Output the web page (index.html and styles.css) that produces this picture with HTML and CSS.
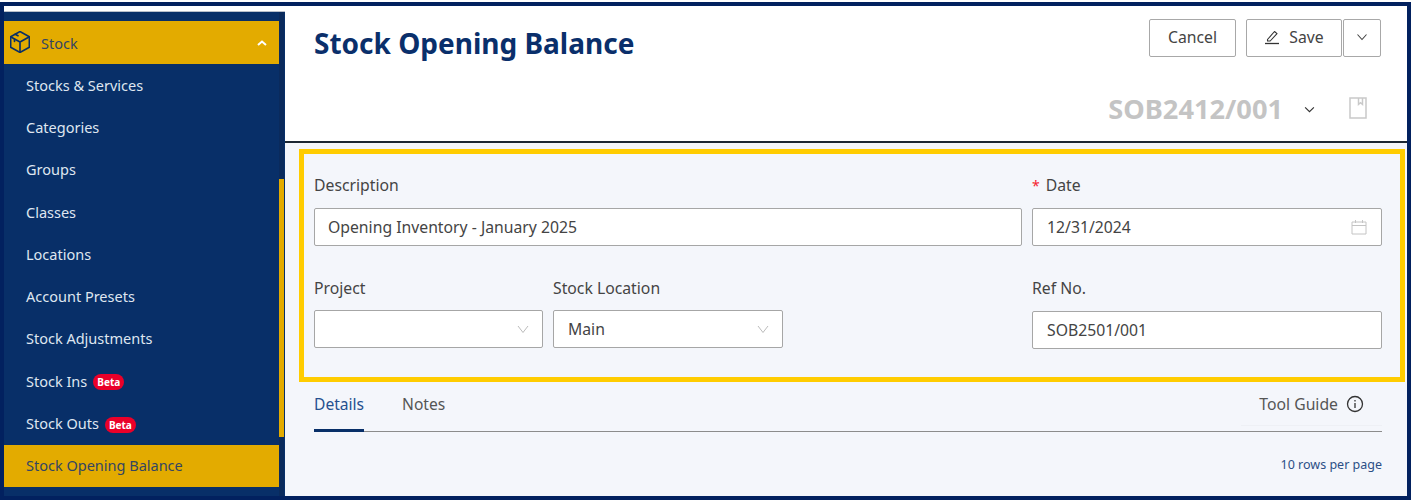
FILE: index.html
```html
<!DOCTYPE html>
<html lang="en">
<head>
<meta charset="utf-8">
<title>Stock Opening Balance</title>
<link rel="stylesheet" href="styles.css">
</head>
<body>
<div class="frame">
  <aside class="sidebar">
    <div class="sidebar-strip"></div>
    <div class="sidebar-body">
      <nav class="menu">
        <div class="menu-head">
          <svg class="cube" viewBox="2 1 18 20" width="20" height="22" fill="none" stroke="#0a2f66" stroke-width="1.500" stroke-linejoin="round" stroke-linecap="round"><path d="M11 1.500l8.500 4.800v9.400L11 20.500l-8.500-4.800V6.300z"/><path d="M2.800 6.500L11 11l8.200-4.500M11 11v9.300"/><path d="M6.700 3.900l2.500 1.400M6 8.500v2"/></svg>
          <span class="menu-head-label">Stock</span>
          <svg class="caret" viewBox="0 0 10 6" width="10" height="6" fill="none" stroke="#fff" stroke-width="2"><path d="M1 5l4-3.500L9 5"/></svg>
        </div>
        <a class="menu-item">Stocks &amp; Services</a>
        <a class="menu-item">Categories</a>
        <a class="menu-item">Groups</a>
        <a class="menu-item">Classes</a>
        <a class="menu-item">Locations</a>
        <a class="menu-item">Account Presets</a>
        <a class="menu-item">Stock Adjustments</a>
        <a class="menu-item">Stock Ins <span class="beta">Beta</span></a>
        <a class="menu-item">Stock Outs <span class="beta">Beta</span></a>
        <a class="menu-item active">Stock Opening Balance</a>
      </nav>
      <div class="scrolltrack"><div class="scrollthumb"></div></div>
    </div>
  </aside>
  <main class="main">
    <header class="header">
      <div class="title-row">
        <h1 class="title">Stock Opening Balance</h1>
        <div class="actions">
          <button class="btn btn-cancel">Cancel</button>
          <button class="btn btn-save">
            <svg viewBox="0 0 16 16" width="16" height="16" fill="none" stroke="#333" stroke-width="1.100" stroke-linejoin="round"><path d="M3.500 10.500L10.500 2.500l2.500 2.200-6.800 7.300H3.500z"/><path d="M1 14.500h14" stroke-width="1.300"/></svg>
            Save
          </button>
          <button class="btn btn-more">
            <svg viewBox="0 0 12 8" width="12" height="8" fill="none" stroke="#444" stroke-width="1.100"><path d="M1.500 1.500L6 6.500l4.500-5"/></svg>
          </button>
        </div>
      </div>
      <div class="doc-row">
        <span class="doc-no">SOB2412/001</span>
        <svg class="doc-chevron" viewBox="0 0 12 8" width="11" height="7" fill="none" stroke="#333" stroke-width="1.300"><path d="M1 1.500L6 6.500l5-5"/></svg>
        <svg class="doc-book" viewBox="0 0 18 22" width="18" height="22" fill="none" stroke="#c9c9c9" stroke-width="1.500"><path d="M1 1h16v20H1z"/><path d="M9.500 1v6.500l2-1.700 2 1.700V1"/></svg>
      </div>
    </header>
    <section class="content">
      <form class="form-box">
        <div class="field">
          <label class="label">Description</label>
          <div class="input input-desc">Opening Inventory - January 2025</div>
        </div>
        <div class="field">
          <label class="label"><span class="req">*</span>Date</label>
          <div class="input input-split">12/31/2024
            <svg viewBox="0 0 16 16" width="16" height="16" fill="none" stroke="#c4c4c4" stroke-width="1"><path d="M1 3h14v12H1zM1 6.500h14M4.500 1v3M11.500 1v3"/></svg>
          </div>
        </div>
        <div class="pair">
          <div class="field">
            <label class="label label-tight">Project</label>
            <div class="input input-split select"><span></span>
              <svg viewBox="0 0 12 8" width="12" height="8" fill="none" stroke="#bbb" stroke-width="1"><path d="M1 1l5 6.500L11 1"/></svg>
            </div>
          </div>
          <div class="field">
            <label class="label label-tight">Stock Location</label>
            <div class="input input-split select">Main
              <svg viewBox="0 0 12 8" width="12" height="8" fill="none" stroke="#bbb" stroke-width="1"><path d="M1 1l5 6.500L11 1"/></svg>
            </div>
          </div>
        </div>
        <div class="field field-ref">
          <label class="label">Ref No.</label>
          <div class="input">SOB2501/001</div>
        </div>
      </form>
      <div class="tabs">
        <a class="tab tab-active">Details</a>
        <a class="tab">Notes</a>
        <div class="guide">Tool Guide
          <svg viewBox="0 0 18 18" width="18" height="18" fill="none" stroke="#333" stroke-width="1.300"><circle cx="9" cy="9" r="7.500"/><path d="M9 8v5M9 5v1.500"/></svg>
        </div>
      </div>
      <div class="rows-per-page">10 rows per page</div>
    </section>
  </main>
</div>
</body>
</html>
```

FILE: styles.css
```css
* { box-sizing: border-box; }
html, body { margin: 0; padding: 0; height: 100%; overflow: hidden; background: #fff; }
body { padding: 2px 1px 0 0; font-family: "Noto Sans", "Open Sans", sans-serif; font-size: 15.750px; color: #444; }

.frame { display: flex; height: 498px; border: 4px solid #02215f; background: #f4f6fb; }

/* sidebar */
.sidebar { width: 281px; flex: none; display: flex; flex-direction: column; background: #082f68; }
.sidebar-strip { height: 6px; background: #fff; border-bottom: 1px solid #b8bfca; }
.sidebar-body { flex: 1; display: flex; }
.menu { width: 275px; flex: none; padding-top: 9px; }
.menu-head { height: 43px; display: flex; align-items: center; background: #e3ab00; padding: 0 12px 0 6px; }
.cube { flex: none; margin-top: -1px; }
.menu-head-label { flex: 1; margin-left: 11px; color: #344563; font-size: 14.500px; }
.menu-item { height: 42.300px; display: flex; align-items: center; gap: 6px; padding: 0 0 1px 22px; color: #dfe6f0; font-size: 14.500px; }
.menu-item.active { background: #e3ab00; color: #344563; }
.beta { background: #ea0029; color: #fff; border-radius: 8px; font-size: 10px; font-weight: 700; line-height: 16px; padding: 0 4px; margin-top: 3px; }
.scrolltrack { width: 5px; background: #0a2a5c; margin-right: 1px; padding-top: 167px; }
.scrollthumb { height: 258px; background: #e3ab00; }

/* main */
.main { flex: 1; min-width: 0; display: flex; flex-direction: column; }
.header { height: 137px; flex: none; background: #fff; border-bottom: 2px solid #1c2733; padding: 13px 26px 0 29px; }
.title-row { display: flex; justify-content: space-between; align-items: flex-start; }
.title { margin: 4px 0 0; font-size: 28px; line-height: 40px; font-weight: 700; color: #0a2f6b; }
.actions { display: flex; }
.btn { height: 38px; background: #fff; border: 1px solid #a8a8a8; border-radius: 2px; font: inherit; color: #444; padding: 0 0 2px; display: flex; align-items: center; justify-content: center; }
.btn-cancel { width: 87px; margin-right: 10px; }
.btn-save { width: 96px; gap: 9px; margin-right: 1px; }
.btn-more { width: 38px; }
.doc-row { display: flex; align-items: center; justify-content: flex-end; margin-top: 28px; padding-right: 14px; }
.doc-no { font-size: 27.200px; line-height: 36px; font-weight: 700; color: #c4c4c4; }
.doc-chevron { margin-left: 21px; }
.doc-book { margin-left: 34px; margin-top: -2px; }

/* content */
.content { flex: 1; padding: 6px 2px 0 14px; }
.form-box { display: grid; grid-template-columns: 708px 350px; column-gap: 10px; align-content: start; height: 233px; padding: 21px 0 0 10px; border: 5px solid #ffcc00; }
.field { display: flex; flex-direction: column; min-width: 0; }
.label { height: 33px; font-size: 15.750px; line-height: 20px; color: #444; }
.label-tight { height: 32px; }
.req { color: #f5222d; font-size: 14px; margin-right: 6px; }
.input { height: 38px; background: #fff; border: 1px solid #a6a6a6; border-radius: 2px; padding: 0 14px; font-size: 15.750px; line-height: 36px; color: #444; }
.input-desc { padding-left: 13px; }
.input-split { display: flex; align-items: center; justify-content: space-between; padding-right: 14px; }
.select { padding-right: 13px; }
.pair { display: flex; gap: 10px; margin-top: 32px; }
.pair .field { width: 230px; }
.pair .field:first-child { width: 229px; }
.field-ref { margin-top: 32px; }

.tabs { display: flex; align-items: flex-start; height: 50px; margin-right: 23px; margin-left: 15px; border-bottom: 1px solid #8c8c8c; }
.tab { font-size: 15.600px; line-height: 20px; padding-top: 12px; height: 50px; margin-right: 38px; color: #555; }
.tab-active { color: #25508f; border-bottom: 3px solid #082f68; }
.guide { margin-left: auto; display: flex; align-items: center; gap: 8px; padding: 12px 18px 11px 18px; line-height: 20px; color: #555; border-bottom: 1px solid #eef0f5; }
.rows-per-page { margin: 24px 23px 0 0; text-align: right; font-size: 12.500px; line-height: 18px; color: #2c4f86; }
```
